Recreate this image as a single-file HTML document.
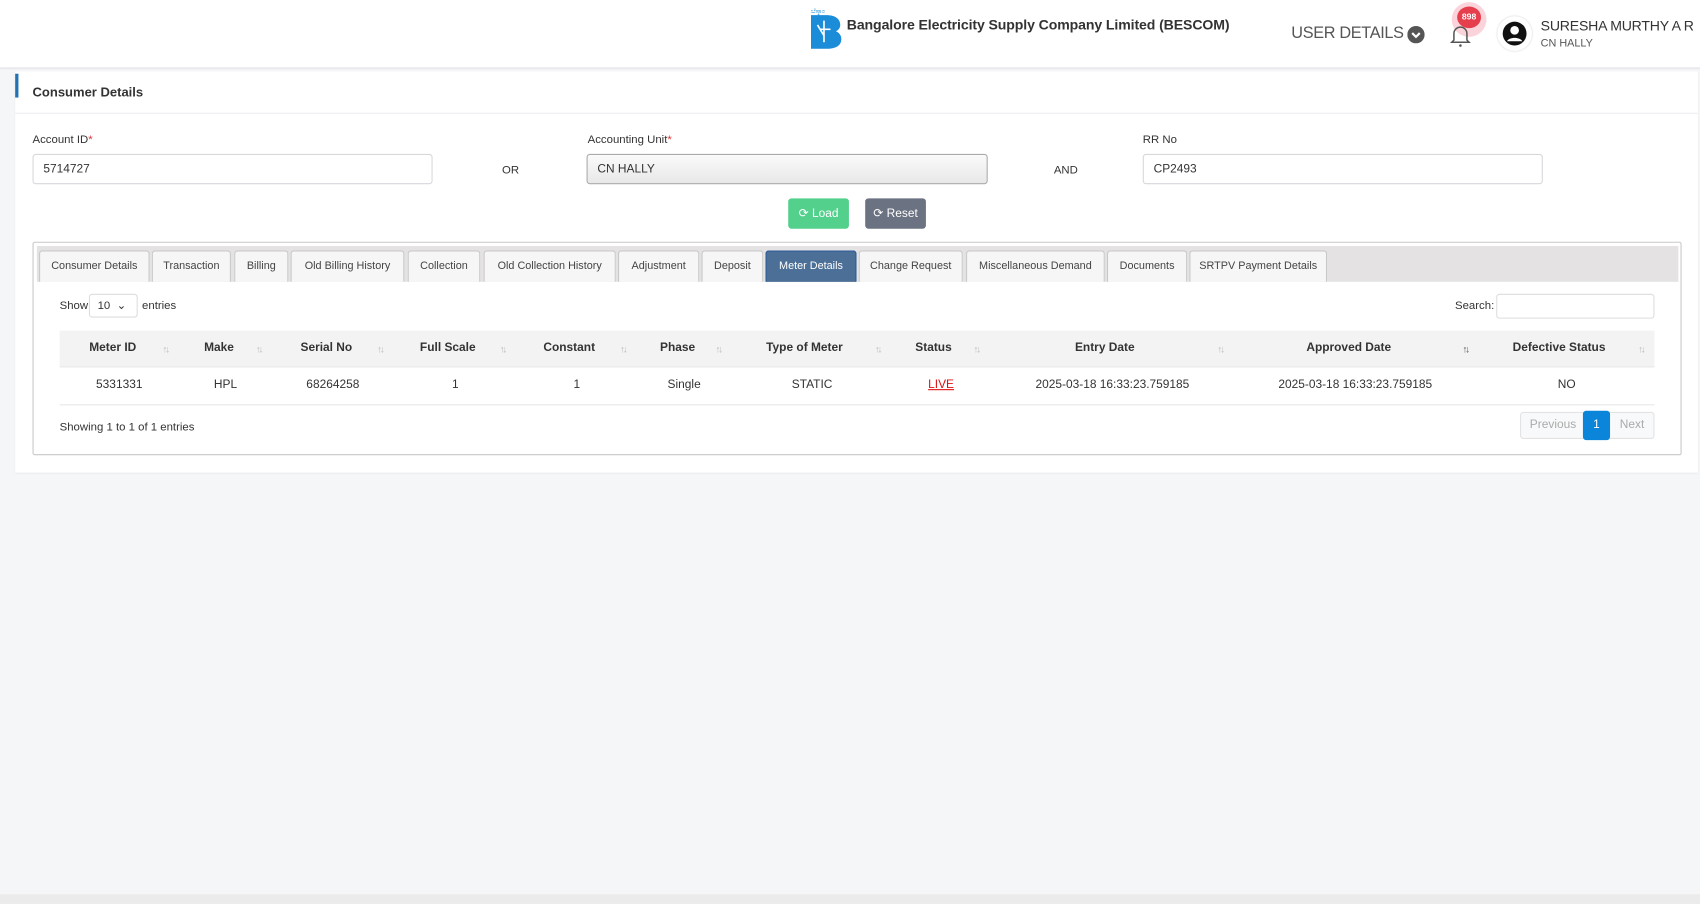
<!DOCTYPE html>
<html><head><meta charset="utf-8">
<style>
*{box-sizing:border-box;margin:0;padding:0}
html,body{width:1700px;height:904px;overflow:hidden;background:#f5f6f8;font-family:"Liberation Sans",sans-serif;color:#333}
#s{position:absolute;left:0;top:0;width:1568px;height:834px;transform:scale(1.0842,1.0839);transform-origin:0 0}
.a{position:absolute;white-space:nowrap}
.hdr{left:0;top:0;width:1568px;height:64px;background:#fff;border-bottom:2px solid #e9eaee}
.card{left:14px;top:66px;width:1552px;height:370px;background:#fff;box-shadow:0 1px 2px rgba(0,0,0,.05)}
.lbl{font-size:10.5px;color:#333}
.inp{height:28px;border:1px solid #d6d8dc;border-radius:3px;background:#fff;font-size:11px;padding:7px 9px;color:#333}
.tab{top:231px;height:29px;border:1px solid #c8c8c8;border-bottom:none;background:#f6f6f6;font-size:10px;color:#444;text-align:center;line-height:28px;border-radius:3px 3px 0 0}
.th{top:315px;font-size:11px;font-weight:bold;color:#333;transform:translateX(-50%)}
.td{top:349px;font-size:11px;color:#333;transform:translateX(-50%)}
.srt{top:317px;font-size:9px;color:#bbb;letter-spacing:-2px}
</style></head><body><div id="s">
<div class="a hdr"></div>
<svg class="a" style="left:746px;top:5px" width="32" height="42" viewBox="0 0 32 42">
<text x="2" y="7" font-size="6" fill="#1a8cd8" font-family="Liberation Sans">ಬೆಸ್ಕಾಂ</text>
<path d="M2 9h14c9 0 13 4 13 9 0 3-2 5-4 6 3 1 5 4 5 7 0 6-5 9-13 9H2z" fill="#1a8cd8"/>
<path d="M8 18l6 10M14 14v20M10 22h10" stroke="#fff" stroke-width="1.5"/>
<text x="2" y="45" font-size="4.5" fill="#1a8cd8" font-weight="bold" font-family="Liberation Sans">BESCOM</text>
</svg>
<div class="a" style="left:781px;top:15px;font-size:13px;font-weight:bold;color:#333;letter-spacing:-0.1px">Bangalore Electricity Supply Company Limited (BESCOM)</div>
<div class="a" style="left:1191px;top:22px;font-size:15px;color:#555;letter-spacing:-0.3px">USER DETAILS</div>
<svg class="a" style="left:1298px;top:24px" width="16" height="16" viewBox="0 0 16 16"><circle cx="8" cy="8" r="8" fill="#555"/><path d="M4.5 6.5L8 10l3.5-3.5" stroke="#fff" stroke-width="2" fill="none"/></svg>
<div class="a" style="left:1339px;top:2px;width:32px;height:32px;border-radius:50%;background:#fbd3da"></div>
<div class="a" style="left:1344px;top:6px;width:22px;height:20px;border-radius:50%;background:#e53e4d;color:#fff;font-size:8px;font-weight:bold;text-align:center;line-height:20px">898</div>
<svg class="a" style="left:1337px;top:22px" width="20" height="22" viewBox="0 0 20 22"><path d="M4 15V9a6 6 0 0 1 12 0v6l2 2H2z" fill="none" stroke="#555" stroke-width="1.4"/><circle cx="10" cy="20" r="1.2" fill="#555"/></svg>
<div class="a" style="left:1381px;top:15px;width:32px;height:32px;border-radius:50%;background:#fff;box-shadow:0 0 2px rgba(0,0,0,.2)"></div>
<svg class="a" style="left:1385px;top:19px" width="24" height="24" viewBox="0 0 24 24"><circle cx="12" cy="12" r="11" fill="#111"/><circle cx="12" cy="9" r="4" fill="#fff"/><path d="M5 19c2-4 12-4 14 0" fill="#fff"/></svg>
<div class="a" style="left:1421px;top:16px;font-size:13px;color:#333;letter-spacing:-0.2px">SURESHA MURTHY A R</div>
<div class="a" style="left:1421px;top:35px;font-size:10px;color:#555">CN HALLY</div>

<div class="a card"></div>
<div class="a" style="left:14px;top:68px;width:3px;height:22px;background:#2273b5"></div>
<div class="a" style="left:30px;top:78px;font-size:12px;font-weight:bold;color:#333">Consumer Details</div>
<div class="a" style="left:14px;top:104px;width:1552px;height:1px;background:#eceef1"></div>

<div class="a lbl" style="left:30px;top:123px">Account ID<span style="color:#d33">*</span></div>
<div class="a lbl" style="left:542px;top:123px">Accounting Unit<span style="color:#d33">*</span></div>
<div class="a lbl" style="left:1054px;top:123px">RR No</div>
<div class="a inp" style="left:30px;top:142px;width:369px">5714727</div>
<div class="a inp" style="left:541px;top:142px;width:370px;background:linear-gradient(#fafafa,#e8e8e8);border-color:#aaa">CN HALLY</div>
<div class="a inp" style="left:1054px;top:142px;width:369px">CP2493</div>
<div class="a lbl" style="left:463px;top:151px">OR</div>
<div class="a lbl" style="left:972px;top:151px">AND</div>
<div class="a" style="left:727px;top:183px;width:56px;height:28px;background:#53d08c;border-radius:3px;color:#fff;font-size:11px;text-align:center;line-height:28px">&#10227; Load</div>
<div class="a" style="left:798px;top:183px;width:56px;height:28px;background:#6b7281;border-radius:3px;color:#fff;font-size:11px;text-align:center;line-height:28px">&#10227; Reset</div>

<div class="a" style="left:30px;top:223px;width:1521px;height:197px;border:1px solid #c8c8c8;border-radius:2px"></div>
<div class="a" style="left:34px;top:227px;width:1514px;height:33px;background:#e4e2e2"></div>
<div class="a tab" style="left:36px;width:102px">Consumer Details</div>
<div class="a tab" style="left:140px;width:73px">Transaction</div>
<div class="a tab" style="left:216px;width:50px">Billing</div>
<div class="a tab" style="left:268px;width:105px">Old Billing History</div>
<div class="a tab" style="left:376px;width:67px">Collection</div>
<div class="a tab" style="left:446px;width:122px">Old Collection History</div>
<div class="a tab" style="left:570px;width:75px">Adjustment</div>
<div class="a tab" style="left:647px;width:57px">Deposit</div>
<div class="a tab" style="left:706px;width:84px;background:#4b6f96;color:#fff;border-color:#2a5a9a">Meter Details</div>
<div class="a tab" style="left:792px;width:96px">Change Request</div>
<div class="a tab" style="left:891px;width:128px">Miscellaneous Demand</div>
<div class="a tab" style="left:1021px;width:74px">Documents</div>
<div class="a tab" style="left:1097px;width:127px">SRTPV Payment Details</div>

<div class="a lbl" style="left:55px;top:276px">Show</div>
<div class="a" style="left:82px;top:271px;width:45px;height:22px;border:1px solid #ddd;border-radius:3px;font-size:10.5px;padding:4px 7px">10 &nbsp;&#8964;</div>
<div class="a lbl" style="left:131px;top:276px">entries</div>
<div class="a lbl" style="left:1342px;top:276px">Search:</div>
<div class="a" style="left:1380px;top:271px;width:146px;height:23px;border:1px solid #ddd;border-radius:3px"></div>

<div class="a" style="left:55px;top:305px;width:1471px;height:33px;background:#f3f3f3"></div>
<div class="a" style="left:55px;top:338px;width:1471px;height:1px;background:#e6e6e6"></div>
<div class="a" style="left:55px;top:373px;width:1471px;height:1px;background:#e6e6e6"></div>
<div class="a th" style="left:104px">Meter ID</div>
<div class="a th" style="left:202px">Make</div>
<div class="a th" style="left:301px">Serial No</div>
<div class="a th" style="left:413px">Full Scale</div>
<div class="a th" style="left:525px">Constant</div>
<div class="a th" style="left:625px">Phase</div>
<div class="a th" style="left:742px">Type of Meter</div>
<div class="a th" style="left:861px">Status</div>
<div class="a th" style="left:1019px">Entry Date</div>
<div class="a th" style="left:1244px">Approved Date</div>
<div class="a th" style="left:1438px">Defective Status</div>
<div class="a srt" style="left:150px">↑↓</div><div class="a srt" style="left:236px">↑↓</div><div class="a srt" style="left:348px">↑↓</div><div class="a srt" style="left:461px">↑↓</div><div class="a srt" style="left:572px">↑↓</div><div class="a srt" style="left:660px">↑↓</div><div class="a srt" style="left:807px">↑↓</div><div class="a srt" style="left:898px">↑↓</div><div class="a srt" style="left:1123px">↑↓</div><div class="a srt" style="left:1349px;color:#555">↑↓</div><div class="a srt" style="left:1511px">↑↓</div>
<div class="a td" style="left:110px">5331331</div>
<div class="a td" style="left:208px">HPL</div>
<div class="a td" style="left:307px">68264258</div>
<div class="a td" style="left:420px">1</div>
<div class="a td" style="left:532px">1</div>
<div class="a td" style="left:631px">Single</div>
<div class="a td" style="left:749px">STATIC</div>
<div class="a td" style="left:868px;color:#d11;text-decoration:underline">LIVE</div>
<div class="a td" style="left:1026px">2025-03-18 16:33:23.759185</div>
<div class="a td" style="left:1250px">2025-03-18 16:33:23.759185</div>
<div class="a td" style="left:1445px">NO</div>

<div class="a lbl" style="left:55px;top:388px">Showing 1 to 1 of 1 entries</div>
<div class="a" style="left:1402px;top:380px;width:124px;height:25px;border:1px solid #e3e3e3;border-radius:3px;background:#f8f9fa"></div>
<div class="a" style="left:1411px;top:386px;font-size:11px;color:#aaa">Previous</div>
<div class="a" style="left:1460px;top:379px;width:25px;height:27px;background:#0a85d9;border-radius:3px;color:#fff;font-size:11px;text-align:center;line-height:27px">1</div>
<div class="a" style="left:1494px;top:386px;font-size:11px;color:#aaa">Next</div>
<div class="a" style="left:0;top:825px;width:1568px;height:9px;background:#ebebeb"></div>
</div></body></html>
